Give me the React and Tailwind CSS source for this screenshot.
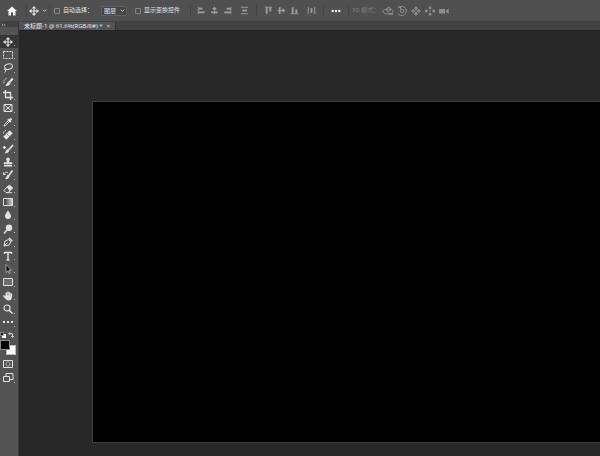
import { useState } from "react";

const Icon = ({ children, size = "size-3" }) => (
  <svg
    viewBox="0 0 12 12"
    className={`${size} shrink-0`}
    fill="none"
    stroke="currentColor"
    strokeWidth="1"
    aria-hidden="true"
  >
    {children}
  </svg>
);

const MoveIcon = () => (
  <Icon>
    <path d="M6 2v8M2 6h8" strokeWidth="1.200" />
    <path
      d="M6 1l2.200 2.600H3.800zM6 11l2.200-2.600H3.800zM1 6l2.600-2.200v4.400zM11 6L8.400 3.800v4.400z"
      fill="currentColor"
      stroke="none"
    />
  </Icon>
);

const tools = [
  { name: "Move", icon: <MoveIcon /> },
  {
    name: "Marquee",
    icon: <Icon><path d="M1.500 2.500h9v7h-9z" strokeDasharray="2 1" /></Icon>,
  },
  {
    name: "Lasso",
    icon: (
      <Icon>
        <ellipse cx="6.500" cy="4.700" rx="4" ry="2.700" transform="rotate(-15 6.500 4.700)" />
        <path d="M3.500 6.500c-1.500.3-1.200 2 .2 1.500M3.700 8c.2 1.300-.4 2-1.200 2.500" />
      </Icon>
    ),
  },
  {
    name: "Quick selection",
    icon: (
      <Icon>
        <path d="M4.500 2.500C2 3 1 6 2.500 8" strokeDasharray="1.300 .9" />
        <path d="M10.800 2.500L7.500 6.200" strokeWidth="2.200" />
        <path d="M6.500 5.500l2 1.800C7.500 9.600 5.400 10.300 3 9.800c1.700-.7 1.700-3.200 3.500-4.300z" fill="currentColor" stroke="none" />
      </Icon>
    ),
  },
  {
    name: "Crop",
    icon: <Icon><path d="M3.500 1v7.500H11M1 3.500h7.500V11" strokeWidth="1.300" /></Icon>,
  },
  {
    name: "Frame",
    icon: <Icon><path d="M2 2.500h8v7H2zM2 2.500l8 7M10 2.500l-8 7" /></Icon>,
  },
  {
    name: "Eyedropper",
    icon: (
      <Icon>
        <path d="M6.500 4.500L2.500 8.500 2 10l1.500-.5 4-4" />
        <path d="M6 3.300l2.700 2.700M7.300 4.700L9.500 2.500" strokeWidth="2" />
      </Icon>
    ),
  },
  {
    name: "Healing",
    icon: (
      <Icon>
        <path d="M2.800 9.200l6.400-6.400" strokeWidth="4.300" />
        <path d="M4.500 4.500l3 3" stroke="#6b6b6b" strokeWidth=".7" />
        <path d="M1.500 4.500c0-2 1-3 3-3" strokeDasharray="1 .7" />
      </Icon>
    ),
  },
  {
    name: "Brush",
    icon: (
      <Icon>
        <path d="M11 2L6.500 7" strokeWidth="1.800" />
        <path d="M5.300 6l2 1.800C6.500 10 4.800 10.500 2.500 10c1.600-.6 1.200-2.800 2.800-4zM.5 4.500l1.800-1.700L4.300 4.500 2.500 6.300z" fill="currentColor" stroke="none" />
      </Icon>
    ),
  },
  {
    name: "Stamp",
    icon: (
      <Icon>
        <path d="M4.200 3.200a1.800 1.800 0 013.600 0c0 1-.7 1.300-.7 3H10.200v2H1.800v-2h3.100c0-1.700-.7-2-.7-3zM2 9h8v1.500H2z" fill="currentColor" stroke="none" />
      </Icon>
    ),
  },
  {
    name: "History brush",
    icon: (
      <Icon>
        <path d="M10.500 1.500L6.500 7" strokeWidth="1.600" />
        <path d="M5.800 5.800l1.800 1.500C6.800 9.800 5 10.500 2.800 10c1.600-.6 1.400-3 3-4.200z" fill="currentColor" stroke="none" />
        <path d="M2 5.500c0-2 2.500-3 4-1.500M1.500 3.500V5.500h2" />
      </Icon>
    ),
  },
  {
    name: "Eraser",
    icon: (
      <Icon>
        <path d="M5 4l2.500-2L11 5 8.300 7.500z" fill="currentColor" strokeWidth=".5" />
        <path d="M5.200 3.800L2 7.500l2 2h2L8 8z" />
        <path d="M4 9.700h6" />
      </Icon>
    ),
  },
  {
    name: "Gradient",
    icon: (
      <Icon>
        <defs>
          <linearGradient id="toolGradient">
            <stop stopColor="#2e2e2e" />
            <stop offset="1" stopColor="#d8d8d8" />
          </linearGradient>
        </defs>
        <path d="M1.500 2.500h9v7h-9z" fill="url(#toolGradient)" />
      </Icon>
    ),
  },
  {
    name: "Blur",
    icon: <Icon><path d="M6 1.500c1.500 2.200 3 3.700 3 5.500a3 3 0 01-6 0c0-1.800 1.500-3.300 3-5.500z" fill="currentColor" stroke="none" /></Icon>,
  },
  {
    name: "Dodge",
    icon: (
      <Icon>
        <circle cx="7" cy="4.700" r="3.200" fill="currentColor" stroke="none" />
        <path d="M5 7l-3 3.500" strokeWidth="1.500" />
      </Icon>
    ),
  },
  {
    name: "Pen",
    icon: (
      <Icon>
        <path d="M2 10l1-5 3.500-1.500 2.300 2.300L7.300 9zM2 10l3.500-3.500" />
        <path d="M7 2l3.200 3.200" strokeWidth="1.700" />
      </Icon>
    ),
  },
  {
    name: "Type",
    icon: <Icon><path d="M2.500 4V2.500h7V4M6 2.500v7.500M4.500 10h3" strokeWidth="1.400" /></Icon>,
  },
  {
    name: "Path selection",
    icon: <Icon><path d="M4 1.500v8l2-1.700 1.300 3 1-.5L7 7.300h2.500z" fill="#0c0c0c" strokeWidth=".6" /></Icon>,
  },
  {
    name: "Rectangle",
    icon: <Icon><path d="M1.500 2.500h9v7h-9z" fill="#6c6c6c" /></Icon>,
  },
  {
    name: "Hand",
    icon: (
      <Icon>
        <path d="M4.300 6V3M6 6V2M7.700 6V2.700M9.400 6.500V4M3.700 8L1.800 5.700" strokeWidth="1.400" strokeLinecap="round" />
        <path d="M3.500 5.500h6.600c0 3-1 5-3.300 5S4 9.500 2.800 7z" fill="currentColor" stroke="none" />
      </Icon>
    ),
  },
  {
    name: "Zoom",
    icon: (
      <Icon>
        <circle cx="5" cy="5" r="3" strokeWidth="1.200" />
        <path d="M7.200 7.200l3.300 3.300" strokeWidth="1.600" />
      </Icon>
    ),
  },
  {
    name: "More tools",
    icon: (
      <Icon>
        <path d="M1 5h2v2H1zM5 5h2v2H5zM9 5h2v2H9z" fill="currentColor" stroke="none" />
      </Icon>
    ),
  },
];

const alignHorizontal = [
  { name: "Align left", line: "M2.500 2v8", bars: "M3 4h4M3 8h6.500" },
  { name: "Align center", line: "M6 2v8", bars: "M4 4h4M2.500 8h7" },
  { name: "Align right", line: "M9.500 2v8", bars: "M5 4h4M2.500 8H9" },
];

const alignVertical = [
  { name: "Align top", line: "M2 2.500h8", bars: "M4 3v6.500M8 3v4" },
  { name: "Align middle", line: "M2 6h8", bars: "M4 2.500v7M8 4v4" },
  { name: "Align bottom", line: "M2 9.500h8", bars: "M4 2.500V9M8 5v4" },
];

const modes3d = [
  {
    name: "Orbit",
    icon: (
      <Icon>
        <ellipse cx="6" cy="6.500" rx="5" ry="2.300" />
        <circle cx="6.500" cy="4.500" r="2" />
        <path d="M7 9h4" strokeWidth="1.500" />
      </Icon>
    ),
  },
  {
    name: "Roll",
    icon: (
      <Icon>
        <path d="M3 2.500a4.500 4.500 0 11-1 6M1.500 2h3v2.500" />
        <circle cx="6" cy="6" r="1.800" />
      </Icon>
    ),
  },
  {
    name: "Pan",
    icon: (
      <Icon>
        <path d="M6 1l2.200 2.700H3.800zM6 11l2.200-2.700H3.800zM1 6l2.700-2.200v4.400zM11 6L8.300 3.800v4.400z" fill="currentColor" stroke="none" />
        <path d="M6 4l2 2-2 2-2-2z" />
      </Icon>
    ),
  },
  {
    name: "Slide",
    icon: (
      <Icon>
        <path d="M6 1.500v2.500M6 8v2.500M1 6h2.500M8.500 6H11" strokeWidth="2.400" />
        <path d="M5.300 5.300h1.400v1.400H5.300z" fill="currentColor" stroke="none" />
      </Icon>
    ),
  },
  {
    name: "Camera",
    icon: (
      <Icon>
        <path d="M1 4h6v4.500H1zM7.300 6.200l3.400-2.700v5.400z" fill="currentColor" stroke="none" />
      </Icon>
    ),
  },
];

const Chevron = () => (
  <svg viewBox="0 0 6 6" className="size-[5px] shrink-0" fill="none" stroke="currentColor" aria-hidden="true">
    <path d="M1 2l2 2 2-2" />
  </svg>
);

const Divider = () => <span className="h-3 w-px shrink-0 bg-[#444444]" />;

const CheckOption = ({ label }) => (
  <label className="flex shrink-0 items-center gap-[3px] whitespace-nowrap">
    <input
      type="checkbox"
      className="size-[6px] appearance-none rounded-[1px] border border-[#858585] checked:bg-[#858585]"
    />
    {label}
  </label>
);

const AlignGroup = ({ items }) => (
  <div className="flex shrink-0 gap-[2px]">
    {items.map((item) => (
      <button key={item.name} aria-label={item.name}>
        <Icon size="size-[11px]">
          <path d={item.line} />
          <path d={item.bars} strokeWidth="2" />
        </Icon>
      </button>
    ))}
  </div>
);

const OptionsBar = () => (
  <header className="flex h-[22px] shrink-0 items-center overflow-hidden border-b border-[#404040] bg-[#505050] pl-[6px] text-[6px] text-[#e4e4e4]">
    <button aria-label="Home" className="mr-2">
      <Icon>
        <path d="M6 1.500L1 6h1.500v4.500h2.500V7.500h2v3h2.500V6H11z" fill="#f3f3f3" stroke="none" />
      </Icon>
    </button>
    <Divider />
    <button aria-label="Move tool presets" className="ml-px flex items-center gap-[2px]">
      <MoveIcon />
      <Chevron />
    </button>
    <span className="ml-[2px] flex items-center gap-1">
      <Divider />
      <CheckOption label="自动选择：" />
    </span>
    <span className="relative ml-2 flex shrink-0 items-center">
      <select
        aria-label="自动选择"
        className="h-[10px] w-[26px] appearance-none rounded-[1px] border border-[#606060] bg-[#464646] pl-[2px] leading-none"
      >
        <option>图层</option>
        <option>组</option>
      </select>
      <span className="pointer-events-none absolute right-[2px]">
        <Chevron />
      </span>
    </span>
    <span className="mr-[10px] ml-2 shrink-0">
      <CheckOption label="显示变换控件" />
    </span>
    <Divider />
    <div className="flex shrink-0 items-center gap-[6px] pl-[5px] text-[#a0a0a0]">
      <AlignGroup items={alignHorizontal} />
      <button aria-label="Distribute vertically">
        <Icon size="size-[11px]">
          <path d="M2 2.500h8M2 9.500h8" />
          <path d="M3.500 6h5" strokeWidth="2" />
        </Icon>
      </button>
      <Divider />
      <AlignGroup items={alignVertical} />
      <button aria-label="Distribute horizontally">
        <Icon size="size-[11px]">
          <path d="M2.500 2v8M9.500 2v8" />
          <path d="M6 3.500v5" strokeWidth="2" />
        </Icon>
      </button>
      <Divider />
      <button aria-label="More options" className="text-[#f3f3f3]">
        <Icon>
          <circle cx="2.700" cy="6" r="1.200" fill="currentColor" stroke="none" />
          <circle cx="6" cy="6" r="1.200" fill="currentColor" stroke="none" />
          <circle cx="9.300" cy="6" r="1.200" fill="currentColor" stroke="none" />
        </Icon>
      </button>
      <Divider />
    </div>
    <div className="flex shrink-0 items-center gap-[3px] pl-[3px] text-[#808080]">
      <span className="whitespace-nowrap">3D 模式：</span>
      <div className="flex gap-[2px] text-[#8f8f8f]">
        {modes3d.map((mode) => (
          <button key={mode.name} aria-label={mode.name}>
            {mode.icon}
          </button>
        ))}
      </div>
    </div>
  </header>
);

const Toolbar = () => {
  const [active, setActive] = useState("Move");

  return (
    <aside className="flex w-[19px] shrink-0 flex-col border-r border-[#3a3a3a] bg-[#535353] text-[#e2e2e2]">
      <div className="flex h-[5px] shrink-0 items-center bg-[#424242] pl-px">
        <svg viewBox="0 0 6 4" className="h-1 w-[5px]" fill="none" stroke="#c4c4c4" aria-hidden="true">
          <path d="M1 .5l1.500 1.500L1 3.500M3.500 .5L5 2 3.500 3.500" strokeWidth=".8" />
        </svg>
      </div>
      <nav className="mt-2 flex h-[294px] shrink-0 flex-col justify-between">
        {tools.map((tool) => (
          <button
            key={tool.name}
            aria-label={tool.name}
            onClick={() => setActive(tool.name)}
            className={`flex h-[13px] items-center pl-[2px] ${active === tool.name ? "bg-[#363636]" : ""}`}
          >
            {tool.icon}
            <span className="mt-2 size-px bg-[#b5b5b5]" />
          </button>
        ))}
      </nav>
      <div className="mt-[3px] flex items-center justify-between pr-1">
        <button aria-label="Default colors">
          <svg viewBox="0 0 6 6" className="size-[6px]" aria-hidden="true">
            <path d="M2 2h4v4H2z" fill="#fff" />
            <path d="M.5 .5h3v3h-3z" fill="#111" stroke="#bbb" strokeWidth=".6" />
          </svg>
        </button>
        <button aria-label="Swap colors">
          <svg viewBox="0 0 6 6" className="size-[6px]" fill="none" stroke="currentColor" aria-hidden="true">
            <path d="M2 .3L.7 1.700 2 3M1 1.700h3.500V5M3.200 4l1.300 1.500L5.800 4" strokeWidth=".9" />
          </svg>
        </button>
      </div>
      <div className="mt-[2px] grid h-[15px] w-4 shrink-0 grid-cols-[6px_4px_6px] grid-rows-[5px_5px_5px]">
        <button aria-label="Background color" className="col-span-2 col-start-2 row-span-2 row-start-2 border border-[#bbbbbb] bg-white" />
        <button aria-label="Foreground color" className="col-span-2 col-start-1 row-span-2 row-start-1 border border-[#8a8a8a] bg-black" />
      </div>
      <button aria-label="Quick mask" className="mt-[3px] pl-[2px]">
        <Icon>
          <path d="M1.500 2.500h9v7h-9z" />
          <circle cx="6" cy="6" r="2" strokeDasharray="1 .6" />
        </Icon>
      </button>
      <button aria-label="Screen mode" className="mt-[2px] flex items-center pl-[2px]">
        <Icon>
          <path d="M4 1.500h7v6H4z" />
          <path d="M1.500 4.500h6v5h-6z" fill="#535353" />
        </Icon>
        <span className="mt-2 size-px bg-[#b5b5b5]" />
      </button>
    </aside>
  );
};

const App = () => (
  <div className="flex h-screen flex-col overflow-hidden bg-[#282828] font-['Open_Sans','Noto_Sans_CJK_SC',sans-serif]">
    <OptionsBar />
    <div className="flex min-h-0 flex-1">
      <Toolbar />
      <main className="flex min-w-0 flex-1 flex-col">
        <div className="flex h-[9px] shrink-0 border-b border-[#222222] bg-[#424242] text-[6px] leading-none text-[#ececec]">
          <div className="flex items-center gap-1 border-r border-[#303030] bg-[#535353] px-[5px] whitespace-nowrap">
            <span>未标题-1 @ 61.6%(RGB/8#) *</span>
            <button aria-label="Close document">×</button>
          </div>
        </div>
        <section className="flex flex-1 pt-[70px] pb-[13px] pl-[73px]">
          <div className="flex-1 border border-r-0 border-[#3c3c3c] bg-black" />
        </section>
      </main>
    </div>
  </div>
);

export default App;
